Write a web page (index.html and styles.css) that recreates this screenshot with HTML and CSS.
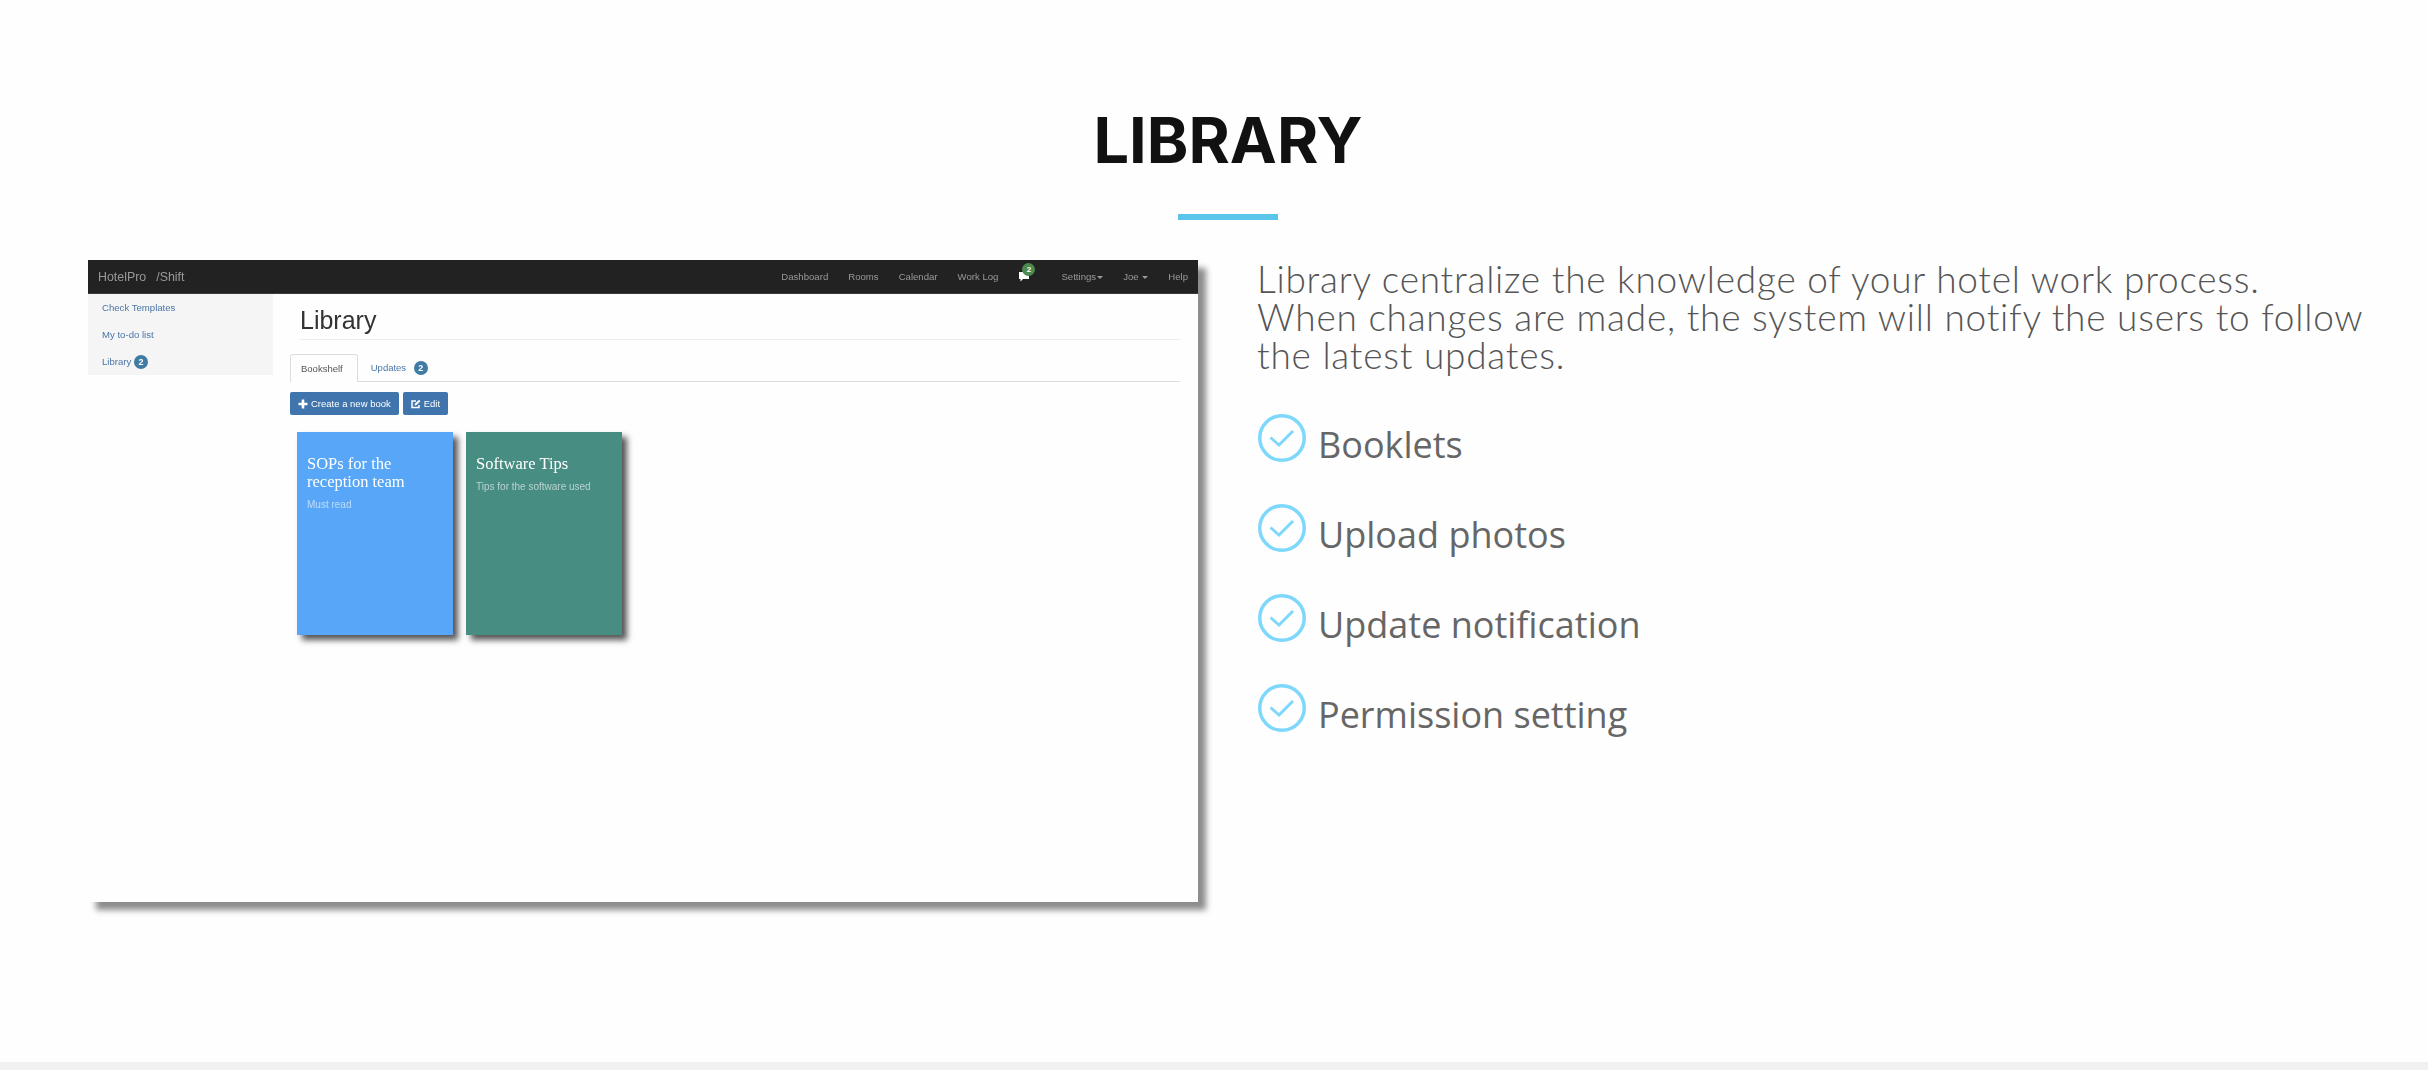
FILE: index.html
```html
<!DOCTYPE html>
<html lang="en">
<head>
  <meta charset="UTF-8">
  <title>Library</title>
  <link rel="stylesheet" href="styles.css">
</head>
<body>

  <section class="library">
    <h1>LIBRARY</h1>
    <div class="rule"></div>

    <div class="row">
      <!-- the app screenshot -->
      <div class="shot">
        <div class="shot-inner">
          <div class="navbar">
            <div class="brand"><span>HotelPro</span><span>/Shift</span></div>
            <div class="nav-links">
              <span>Dashboard</span>
              <span>Rooms</span>
              <span>Calendar</span>
              <span>Work Log</span>
              <span class="chat">
                <svg width="12" height="11" viewBox="0 0 12 11"><path d="M1 1h10v7H5L2.500 10.500V8H1z" fill="#fff"/></svg>
                <b class="chat-badge">2</b>
              </span>
              <span>Settings<i class="caret"></i></span>
              <span>Joe <i class="caret"></i></span>
              <span>Help</span>
            </div>
          </div>

          <div class="app">
            <div class="sidebar">
              <a>Check Templates</a>
              <a>My to-do list</a>
              <a>Library <b class="badge">2</b></a>
            </div>

            <div class="main">
              <h2>Library</h2>
              <div class="tabs">
                <span class="tab active">Bookshelf</span>
                <span class="tab">Updates <b class="badge">2</b></span>
              </div>
              <div class="buttons">
                <span class="btn">
                  <svg width="10" height="10" viewBox="0 0 10 10"><path d="M5 .500v9M.500 5h9" stroke="#fff" stroke-width="2.600" fill="none"/></svg>
                  Create a new book
                </span>
                <span class="btn">
                  <svg width="10" height="10" viewBox="0 0 10 10"><path d="M8 6v2.500H1V2h4" stroke="#fff" stroke-width="1.500" fill="none"/><path d="M3.500 6.500l.5-2L8 .700l1.500 1.500-4 3.800z" fill="#fff"/></svg>
                  Edit
                </span>
              </div>
              <div class="books">
                <div class="book blue">
                  <h3>SOPs for the reception team</h3>
                  <p>Must read</p>
                </div>
                <div class="book green">
                  <h3>Software Tips</h3>
                  <p>Tips for the software used</p>
                </div>
              </div>
            </div>
          </div>
        </div>
      </div>

      <div class="info">
        <p class="lead">Library centralize the knowledge of your hotel work process.<br>When changes are made, the system will notify the users to follow<br>the latest updates.</p>
        <ul class="features">
          <li>
            <svg class="check" width="48" height="48" viewBox="0 0 48 48"><circle cx="24" cy="24" r="22.250" fill="none" stroke="#7ed8fb" stroke-width="3.500"/><path d="M12.500 23.500L21 31 35 17" fill="none" stroke="#7ed8fb" stroke-width="3"/></svg>
            <span>Booklets</span>
          </li>
          <li>
            <svg class="check" width="48" height="48" viewBox="0 0 48 48"><circle cx="24" cy="24" r="22.250" fill="none" stroke="#7ed8fb" stroke-width="3.500"/><path d="M12.500 23.500L21 31 35 17" fill="none" stroke="#7ed8fb" stroke-width="3"/></svg>
            <span>Upload photos</span>
          </li>
          <li>
            <svg class="check" width="48" height="48" viewBox="0 0 48 48"><circle cx="24" cy="24" r="22.250" fill="none" stroke="#7ed8fb" stroke-width="3.500"/><path d="M12.500 23.500L21 31 35 17" fill="none" stroke="#7ed8fb" stroke-width="3"/></svg>
            <span>Update notification</span>
          </li>
          <li>
            <svg class="check" width="48" height="48" viewBox="0 0 48 48"><circle cx="24" cy="24" r="22.250" fill="none" stroke="#7ed8fb" stroke-width="3.500"/><path d="M12.500 23.500L21 31 35 17" fill="none" stroke="#7ed8fb" stroke-width="3"/></svg>
            <span>Permission setting</span>
          </li>
        </ul>
      </div>
    </div>
  </section>

  <div class="bottom-band"></div>

</body>
</html>
```

FILE: styles.css
```css
* {
  box-sizing: border-box;
}

body {
  margin: 0;
  height: 1070px;
  overflow: hidden;
  background: #fefefe;
  font-family: 'Liberation Sans', sans-serif;
  display: flex;
  flex-direction: column;
}

.library {
  flex: 1;
  padding: 102px 0 0 88px;
}

h1 {
  margin: 0;
  width: 2280px;
  text-align: center;
  font-family: 'Inter', sans-serif;
  font-size: 63px;
  line-height: 76px;
  font-weight: 700;
  color: #111;
}

.rule {
  width: 100px;
  height: 6px;
  margin: 36px 0 40px 1090px;
  background: #5bc4ea;
}

.row {
  display: flex;
  gap: 59px;
}

/* screenshot */
.shot {
  width: 1110px;
  height: 642px;
  background: #fefefe;
  box-shadow: 8px 8px 6px #8c8c8c;
}

.shot-inner {
  height: 100%;
  filter: blur(0.4px);
}

.navbar {
  height: 34px;
  background: #222;
  border-bottom: 1px solid #3a3a3a;
  display: flex;
  align-items: center;
  justify-content: space-between;
  padding: 0 10px 0 10px;
  color: #999;
  font-size: 9.600px;
}

.brand {
  display: flex;
  gap: 10px;
  font-size: 12.400px;
}

.nav-links {
  display: flex;
  align-items: center;
  gap: 20px;
}

.chat {
  position: relative;
  display: flex;
  margin-right: 11px;
}

.chat-badge {
  position: absolute;
  top: -8px;
  left: 4px;
  width: 13px;
  height: 13px;
  border-radius: 50%;
  background: #4c8b4f;
  color: #fff;
  font-size: 8px;
  line-height: 13px;
  text-align: center;
}

.caret {
  display: inline-block;
  margin-left: 1px;
  vertical-align: middle;
  border-top: 3px solid #999;
  border-left: 3px solid transparent;
  border-right: 3px solid transparent;
}

.app {
  display: flex;
  align-items: flex-start;
}

.sidebar {
  width: 185px;
  background: #f5f5f5;
  display: flex;
  flex-direction: column;
  color: #4a76a8;
  font-size: 9.600px;
}

.sidebar a {
  height: 27px;
  line-height: 27px;
  padding-left: 14px;
}

.badge {
  display: inline-block;
  min-width: 14px;
  height: 14px;
  border-radius: 7px;
  background: #3f7ba3;
  color: #fff;
  font-size: 9px;
  line-height: 14px;
  text-align: center;
  vertical-align: middle;
}

.main {
  flex: 1;
  padding: 0 18px 0 17px;
}

h2 {
  margin: 0 0 14px 10px;
  height: 46px;
  padding-top: 7px;
  border-bottom: 1px solid #eee;
  font-size: 25px;
  font-weight: 400;
  line-height: 38px;
  color: #333;
}

.tabs {
  display: flex;
  height: 28px;
  border-bottom: 1px solid #ddd;
  font-size: 9.500px;
}

.tab {
  padding: 0 12px 0 13px;
  line-height: 28px;
  color: #4a76a8;
}

.tab.active {
  color: #555;
  background: #fefefe;
  border: 1px solid #ddd;
  border-bottom: 0;
  border-radius: 3px 3px 0 0;
  height: 28px;
  padding: 0 14px 0 10px;
}

.tab .badge {
  margin-left: 5px;
}

.buttons {
  display: flex;
  gap: 4px;
  margin-top: 10px;
}

.btn {
  display: flex;
  align-items: center;
  gap: 3px;
  height: 23px;
  padding: 0 8px;
  border-radius: 2px;
  background: #3f74ad;
  color: #fff;
  font-size: 9.500px;
}

.books {
  display: flex;
  gap: 13px;
  margin: 17px 0 0 7px;
}

.book {
  width: 156px;
  height: 203px;
  padding: 23px 10px;
  color: #fff;
  box-shadow: 5px 5px 6px #555;
}

.book h3 {
  margin: 0;
  font-family: 'Liberation Serif', serif;
  font-size: 16.500px;
  font-weight: 400;
  line-height: 18px;
}

.book p {
  margin: 7px 0 0;
  font-size: 10px;
  line-height: 14px;
  opacity: 0.6;
}

.blue {
  background: #58a6f7;
}

.green {
  background: #478d82;
}

/* right column */
.info {
  width: 1120px;
}

.lead {
  margin: 0;
  font-family: 'Lato', sans-serif;
  font-size: 37px;
  font-weight: 300;
  letter-spacing: 0.76px;
  line-height: 38px;
  color: #555;
}

.features {
  list-style: none;
  margin: 40px 0 0 1px;
  padding: 0;
}

.features li {
  display: flex;
  gap: 12px;
  height: 90px;
  color: #666;
  font-family: 'Open Sans', sans-serif;
  font-size: 36px;
  line-height: 50px;
}

.features span {
  margin-top: 6px;
}

.bottom-band {
  height: 8px;
  background: #f1f1f1;
}
```
